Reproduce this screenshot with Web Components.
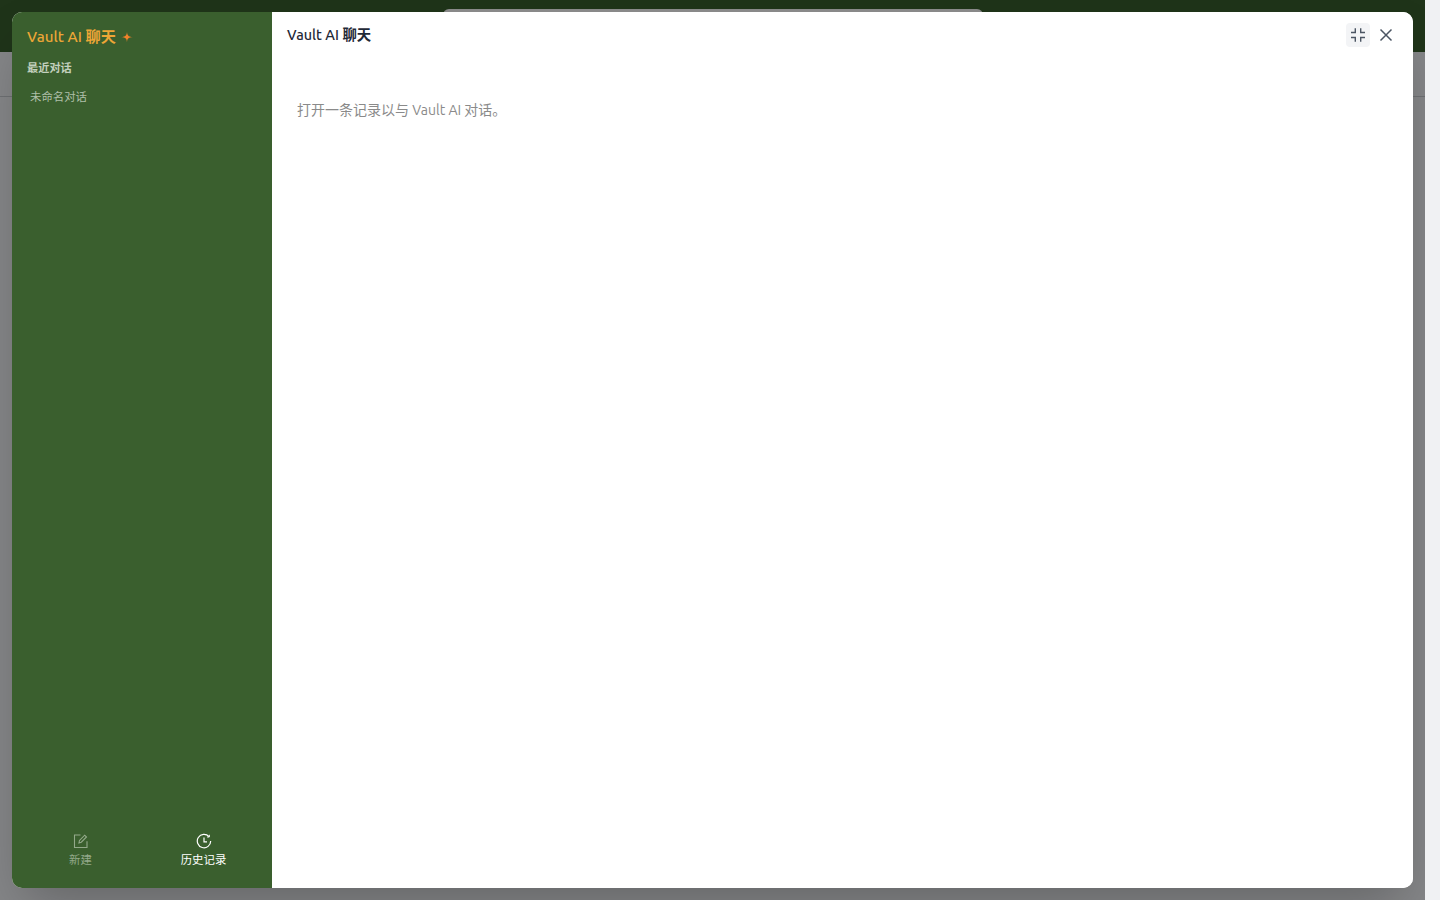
<!DOCTYPE html>
<html lang="zh"><head><meta charset="utf-8"><title>Vault AI 聊天</title>
<style>
html,body{margin:0;height:100%;overflow:hidden}
body{font-family:Ubuntu,"Lato","Noto Sans CJK SC",sans-serif;background:#f1f1f2}
</style></head><body>
<app-page>
  <chat-modal>
    <chat-sidebar slot="side"></chat-sidebar>
    <chat-main slot="main"></chat-main>
  </chat-modal>
</app-page>
<script>
const FONT='Ubuntu,"Lato","Noto Sans CJK SC",sans-serif';
function def(name,html){customElements.define(name,class extends HTMLElement{constructor(){super();this.attachShadow({mode:'open'}).innerHTML=html}})}
def('app-page',`<style>
:host{display:flex;width:1440px;height:900px;overflow:hidden}
.view{position:relative;width:1425px;height:900px;background:#f3f4f8;overflow:hidden}
.top{height:52px;background:#3a5f2e;display:flex;justify-content:center;box-sizing:border-box;padding:9px 0 0 0}
.search{width:540px;height:34px;margin-left:1px;background:#fff;border-radius:6px}
.sub{height:44px;border-bottom:1px solid #c9ccd2;box-sizing:content-box}
.shade{position:absolute;inset:0;background:rgba(0,0,0,.45);display:flex;padding:12px;box-sizing:border-box}
.bar{width:15px;height:900px;background:#f0f1f3}
</style><div class="view"><div class="top"><div class="search"></div></div><div class="sub"></div><div class="shade"><slot></slot></div></div><div class="bar"></div>`);
def('chat-modal',`<style>
:host{display:flex;flex:1;height:876px;background:#fff;border-radius:10px;overflow:hidden;box-shadow:0 25px 50px -12px rgba(0,0,0,.25)}
</style><slot name="side"></slot><slot name="main"></slot>`);
def('chat-sidebar',`<style>
:host{display:flex;flex-direction:column;width:260px;height:876px;background:#3a5f2e;font-family:${FONT};flex:none}
.title{display:flex;align-items:center;gap:5px;height:18px;margin:16px 0 0 15px;color:#eda636;font-size:15.2px;font-weight:500;line-height:18px}
.title b{font-weight:700}
h3{margin:14px 0 0 15px;font-size:11.2px;line-height:16px;font-weight:700;color:#c3d0bd}
.item{margin:13px 0 0 18px;font-size:11.4px;line-height:16px;color:#afbfa9}
.grow{flex:1}
.foot{display:grid;grid-template-columns:137px 109px;padding:0 0 20px 0}
.tab{display:flex;flex-direction:column;align-items:center;font-size:11.4px;line-height:16px;color:#93a98a;gap:3px}
.tab.on{color:#fff}
svg{display:block}
</style>
<div class="title"><span>Vault AI <b>聊天</b></span><svg width="12" height="12" viewBox="0 0 12 12"><path d="M6 .2C6.100 4.300 7.200 5.700 11.800 6 7.200 6.300 6.100 7.700 6 11.800 5.900 7.700 4.800 6.300.2 6 4.800 5.700 5.900 4.300 6 .2Z" fill="#f0822a"/></svg></div>
<h3>最近对话</h3>
<div class="item">未命名对话</div>
<div class="grow"></div>
<div class="foot">
<div class="tab"><svg width="16" height="16" viewBox="0 0 16 16" fill="none" stroke="currentColor" stroke-width="1.100"><path d="M7.500 2H1.500v12.500H14V8.200"/><path d="M6 9.900 6.500 7.400 11.700 2.200l1.800 1.800-5.200 5.200Z"/></svg><span>新建</span></div>
<div class="tab on"><svg width="16" height="16" viewBox="0 0 16 16" fill="none" stroke="currentColor" stroke-width="1.200"><path d="M13 3.600A6.700 6.700 0 1 0 14.700 8"/><path d="M8 4.500V8.800h3"/><path d="M13.300 1.800V4h-2.200" stroke-width="1"/></svg><span>历史记录</span></div>
</div>`);
def('chat-main',`<style>
:host{display:flex;flex-direction:column;flex:1;min-width:0;font-family:${FONT};background:#fff}
header{display:flex;align-items:center;height:46px;padding:0 15px 0 15px}
h2{margin:0;flex:1;font-size:14.4px;font-weight:500;color:#1f2937;line-height:20px}
h2 b{font-weight:700}
.btn{width:24px;height:24px;border-radius:4px;display:flex;align-items:center;justify-content:center;color:#4b5563}
.btn.on{background:#f3f4f6}
.btn+.btn{margin-left:4px}
p{margin:42px 0 0 25px;font-size:14px;line-height:20px;color:#8a8a8a}
</style>
<header><h2>Vault AI <b>聊天</b></h2>
<div class="btn on"><svg width="16" height="16" viewBox="0 0 16 16" fill="none" stroke="currentColor" stroke-width="1.400"><path d="M5.300 1.300V5.500H1M10.700 1.300V5.500H15M5.300 14.700V10.500H1M10.700 14.700V10.500H15"/></svg></div>
<div class="btn"><svg width="16" height="16" viewBox="0 0 16 16" fill="none" stroke="currentColor" stroke-width="1.500"><path d="M2.500 2.500l11 11M13.500 2.500l-11 11"/></svg></div>
</header>
<p>打开一条记录以与 Vault AI 对话。</p>`);
</script>
</body></html>
